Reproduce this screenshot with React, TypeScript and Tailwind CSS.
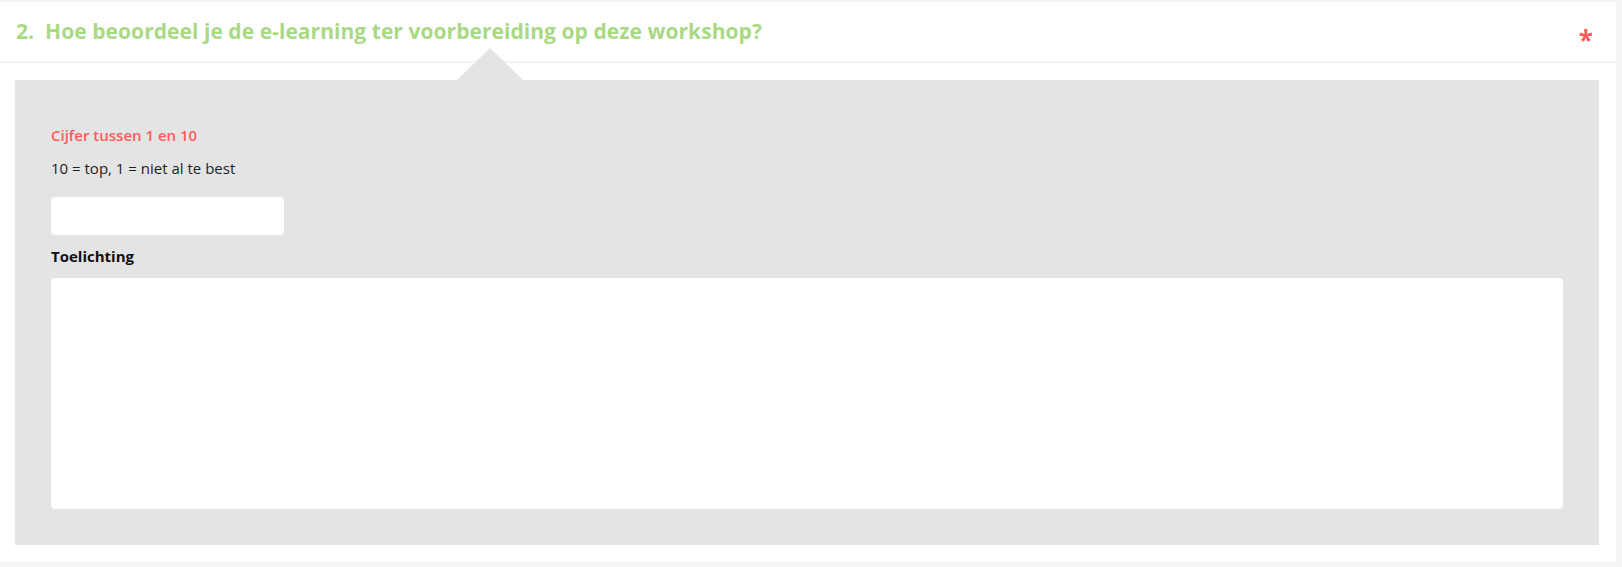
import React, { useState } from 'react';

const Question: React.FC = () => {
  const [score, setScore] = useState('');
  const [note, setNote] = useState('');

  return (
    <div className="bg-white pb-[17px]">
      <div className="h-[61px] border-b-2 border-[#eff2f6] flex items-center justify-between pl-4 pr-[23px]">
        <h2 className="text-[21px] font-bold text-[#aad985] tracking-[0.05px]">
          2.&nbsp; Hoe beoordeel je de e-learning ter voorbereiding op deze workshop?
        </h2>
        <span className="text-[26px] font-bold text-[#ff5a5a] leading-none mt-[16px]">*</span>
      </div>

      <div className="relative mt-[17px] ml-[15px] mr-[17px] bg-[#e4e4e4] pt-[45px] px-9 pb-9">
        <div className="absolute left-[442px] -top-[32px] w-[66px] h-[32px] bg-[#e4e4e4] [clip-path:polygon(50%_0,100%_100%,0_100%)]" />
        <p className="text-[15px] leading-5 font-semibold text-[#ff5b5b]">Cijfer tussen 1 en 10</p>
        <p className="mt-[13px] text-[15px] leading-5 text-[#1e1e1e]">10 = top, 1 = niet al te best</p>
        <input
          type="text"
          value={score}
          onChange={(e) => setScore(e.target.value)}
          className="block mt-[19px] w-[233px] h-[38px] rounded bg-white px-3 text-[15px] outline-none"
        />
        <label className="block mt-[11px] text-[15px] leading-5 font-bold text-[#111]">Toelichting</label>
        <textarea
          value={note}
          onChange={(e) => setNote(e.target.value)}
          className="block mt-[12px] w-full h-[231px] rounded bg-white p-3 text-[15px] outline-none resize-none"
        />
      </div>
    </div>
  );
};

export default function App() {
  return (
    <div
      className="min-h-screen bg-[#f4f4f4] pt-[2px] pr-[6px]"
      style={{ fontFamily: '"Open Sans", sans-serif' }}
    >
      <Question />
    </div>
  );
}
